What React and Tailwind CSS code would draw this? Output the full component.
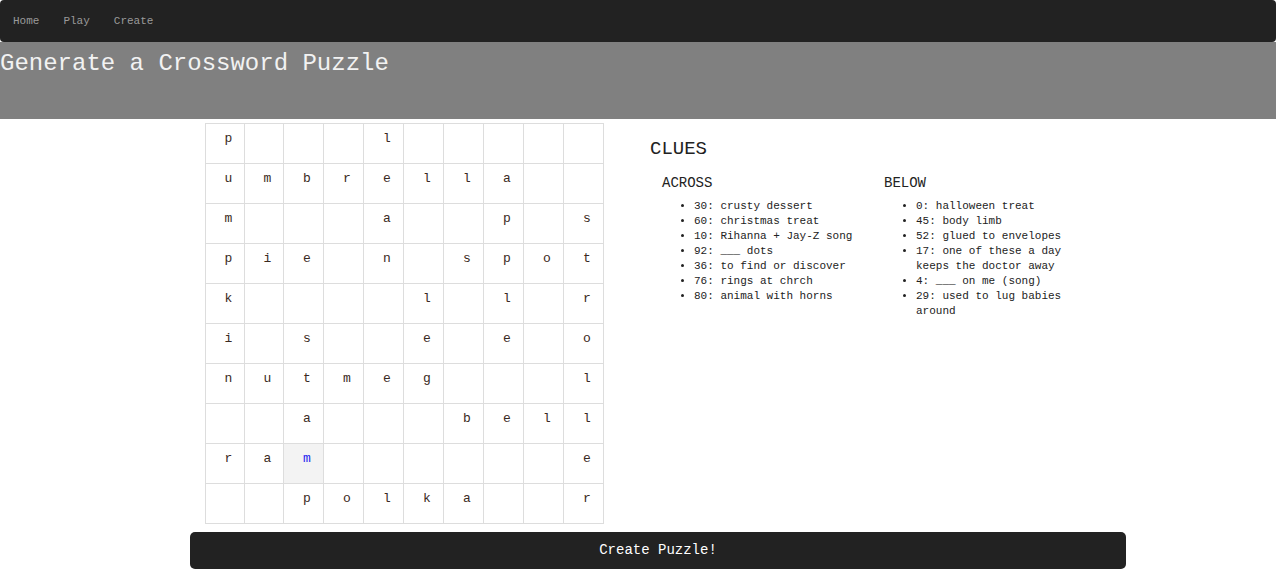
import React from "react";

const rows = [
  "p___l_____",
  "umbrella__",
  "m___a__p_s",
  "pie_n_spot",
  "k____l_l_r",
  "i_s__e_e_o",
  "nutmeg___l",
  "__a___bell",
  "ram______e",
  "__polka__r",
];

const across = [
  "30: crusty dessert",
  "60: christmas treat",
  "10: Rihanna + Jay-Z song",
  "92: ___ dots",
  "36: to find or discover",
  "76: rings at chrch",
  "80: animal with horns",
];

const below = [
  "0: halloween treat",
  "45: body limb",
  "52: glued to envelopes",
  "17: one of these a day keeps the doctor away",
  "4: ___ on me (song)",
  "29: used to lug babies around",
];

const mono = { fontFamily: '"Liberation Mono", "DejaVu Sans Mono", monospace' };

export default function App() {
  return (
    <div className="bg-white min-h-[570px] text-[#333]" style={mono}>
      <nav className="h-[42px] bg-[#222] rounded-[4px] flex items-center pl-[13px] gap-[24px] text-[11px] text-[#9a9a9a]">
        <span>Home</span>
        <span>Play</span>
        <span>Create</span>
      </nav>
      <header className="h-[77px] bg-[#808080] pt-[8px]">
        <h1 className="text-[24px] leading-[28px] text-[#f2f2f2]">Generate a Crossword Puzzle</h1>
      </header>
      <div className="flex pl-[205px] pt-[4px] gap-[46px]">
        <div className="grid grid-cols-[39px_39px_repeat(8,40px)] border-r border-b border-[#ddd] w-[399px]">
          {rows.map((r, ri) =>
            r.split("").map((ch, ci) => {
              const hl = ri === 8 && ci === 2;
              return (
                <div
                  key={ri + "-" + ci}
                  className={
                    "h-[40px] border-l border-t border-[#ddd] text-[13px] leading-[20px] pt-[5px] pl-[7px] text-center " +
                    (hl ? "bg-[#f3f3f3] text-[#2424f0]" : "text-[#3a2a22]")
                  }
                >
                  {ch === "_" ? "" : ch}
                </div>
              );
            })
          )}
        </div>
        <div className="pt-[15px]">
          <h2 className="text-[19px] leading-[22px] text-[#222]">CLUES</h2>
          <div className="flex pl-[12px] pt-[14px]">
            <div className="w-[222px]">
              <h3 className="text-[14px] leading-[18px] text-[#222]">ACROSS</h3>
              <ul className="list-disc pl-[32px] pt-[7px] text-[11px] leading-[15px] text-[#222]">
                {across.map((c) => (
                  <li key={c}>{c}</li>
                ))}
              </ul>
            </div>
            <div className="w-[187px]">
              <h3 className="text-[14px] leading-[18px] text-[#222]">BELOW</h3>
              <ul className="list-disc pl-[32px] pt-[7px] text-[11px] leading-[15px] text-[#222]">
                {below.map((c) => (
                  <li key={c}>{c}</li>
                ))}
              </ul>
            </div>
          </div>
        </div>
      </div>
      <div className="pl-[190px] pt-[8px]">
        <button className="w-[936px] h-[37px] bg-[#222] rounded-[5px] text-white text-[14px]" style={mono}>
          Create Puzzle!
        </button>
      </div>
    </div>
  );
}
